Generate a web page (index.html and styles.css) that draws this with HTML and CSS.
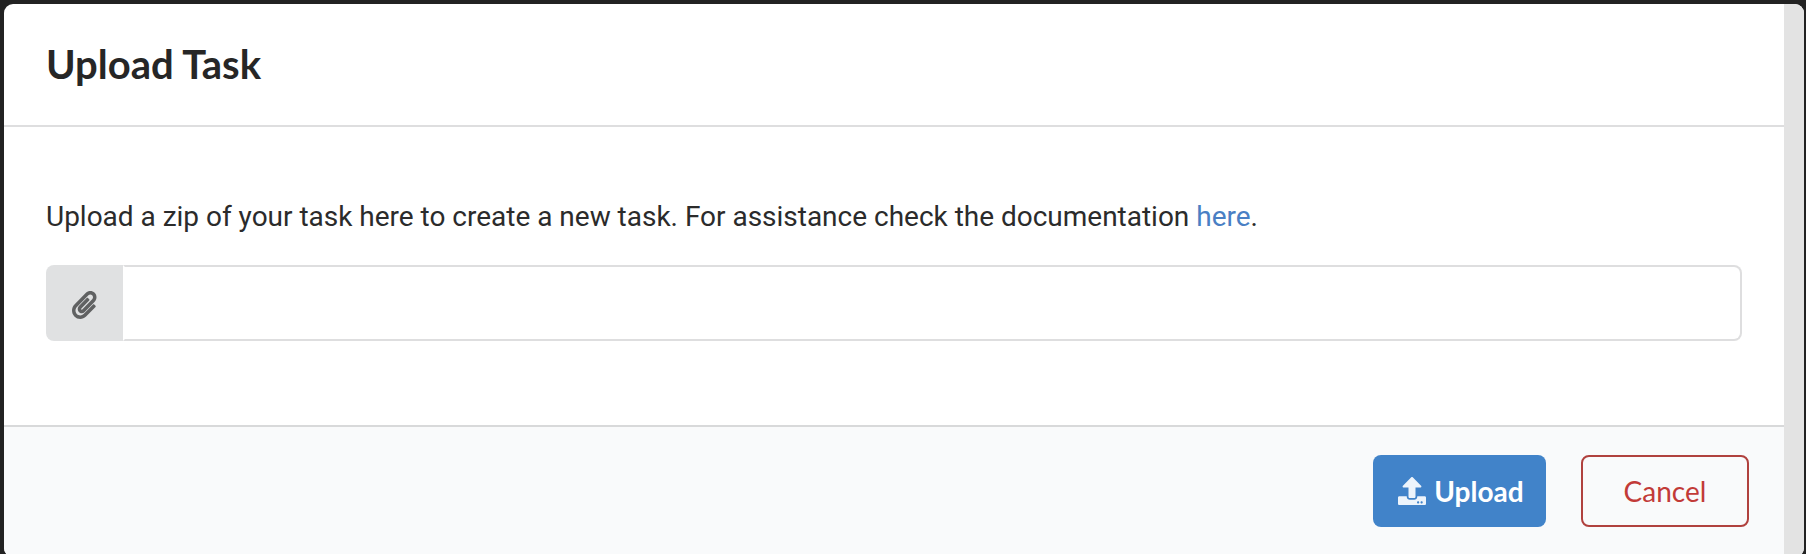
FILE: index.html
```html
<!DOCTYPE html>
<html lang="en">
<head>
<meta charset="utf-8">
<title>Upload Task</title>
<link rel="stylesheet" href="styles.css">
</head>
<body>
<div class="modal">
  <div class="panel">
    <header class="header"><h1 class="title">Upload Task</h1></header>
    <main class="content">
      <p class="message">Upload a zip of your task here to create a new task. For assistance check the documentation <a class="link" href="#">here</a>.</p>
      <div class="field">
        <button class="attach" aria-label="Choose file">
          <svg class="clip" viewBox="0 0 448 512"><path d="M43.246 466.142c-58.43-60.289-57.341-157.511 1.386-217.581L254.392 34c44.316-45.332 116.351-45.336 160.671 0 43.89 44.894 43.943 117.329 0 162.276L232.214 383.128c-29.855 30.537-78.633 30.111-107.982-.998-28.275-29.97-27.368-77.473 1.452-106.953l143.743-146.835c6.182-6.314 16.312-6.422 22.626-.241l22.861 22.379c6.315 6.182 6.422 16.312.241 22.626L171.427 319.927c-4.932 5.045-5.236 13.428-.648 18.292 4.372 4.634 11.245 4.711 15.688.165l182.849-186.851c19.613-20.062 19.613-52.725-.011-72.798-19.189-19.627-49.957-19.637-69.154 0L90.39 293.295c-34.763 35.56-35.299 93.12-1.191 128.313 34.01 35.093 88.985 35.137 123.058.286l172.06-175.999c6.177-6.319 16.307-6.433 22.626-.256l22.877 22.364c6.319 6.177 6.434 16.307.256 22.626l-172.06 175.998c-59.576 60.938-155.943 60.216-214.77-.485z"/></svg>
        </button>
        <input class="input" type="text" readonly aria-label="File name">
      </div>
    </main>
    <footer class="actions">
      <button class="button primary">
        <svg class="upload" viewBox="0 0 512 512"><path d="M296 384h-80c-13.3 0-24-10.7-24-24V192h-87.7c-17.8 0-26.7-21.5-14.1-34.1L242.3 5.7c7.5-7.5 19.8-7.5 27.3 0l152.2 152.2c12.6 12.6 3.7 34.1-14.1 34.1H320v168c0 13.3-10.7 24-24 24zm216-8v112c0 13.3-10.7 24-24 24H24c-13.3 0-24-10.7-24-24V376c0-13.3 10.7-24 24-24h136v8c0 30.9 25.1 56 56 56h80c30.9 0 56-25.1 56-56v-8h136c13.3 0 24 10.7 24 24zm-124 88c0-11-9-20-20-20s-20 9-20 20 9 20 20 20 20-9 20-20zm64 0c0-11-9-20-20-20s-20 9-20 20 9 20 20 20 20-9 20-20z"/></svg>
        <span>Upload</span>
      </button>
      <button class="button cancel">Cancel</button>
    </footer>
  </div>
  <div class="scrollbar"></div>
</div>
</body>
</html>
```
FILE: styles.css
```css
* {
  box-sizing: border-box;
}

body {
  margin: 0;
  height: 554px;
  padding: 4px 2px 0 4px;
  overflow: hidden;
  background: #222;
  font-family: Roboto, sans-serif;
}

.modal {
  display: flex;
  height: 553px;
  border-radius: 9px;
  overflow: hidden;
  background: #fff;
}

.panel {
  flex: 1;
  display: flex;
  flex-direction: column;
}

.scrollbar {
  width: 20px;
  background: #e3e3e3;
}

.header {
  height: 123px;
  padding: 35px 42px 0;
  border-bottom: 2px solid #dededf;
}

.title {
  margin: 0;
  font: bold 40px/50px Lato, sans-serif;
  color: #262626;
}

.content {
  height: 298px;
  padding: 70px 42px 0;
}

.message {
  margin: 0 0 28px;
  font-size: 28px;
  line-height: 40px;
  letter-spacing: -0.012px;
  color: #2b2b2b;
}

.link {
  color: #4a7fc4;
  text-decoration: none;
}

.field {
  display: flex;
  width: 1696px;
  height: 76px;
}

.attach {
  width: 77px;
  padding: 3px 0 0;
  border: 0;
  border-radius: 8px 0 0 8px;
  background: #e0e1e2;
  display: flex;
  align-items: center;
  justify-content: center;
}

.clip {
  width: 24.5px;
  height: 28px;
  fill: #606162;
}

.input {
  flex: 1;
  border: 2px solid #dededf;
  border-left-color: transparent;
  border-radius: 0 8px 8px 0;
  background: #fff;
  outline: 0;
}

.actions {
  flex: 1;
  display: flex;
  align-items: flex-start;
  justify-content: flex-end;
  gap: 35px;
  padding: 28px 35px 0;
  border-top: 2px solid #d8d9da;
  background: #f9fafb;
}

.button {
  display: flex;
  align-items: center;
  justify-content: center;
  height: 72px;
  padding: 0;
  border: 0;
  border-radius: 8px;
  font: 28px/28px Lato, sans-serif;
}

.primary {
  width: 173px;
  gap: 8px;
  padding-left: 3px;
  background: #4183c9;
  color: #fff;
  font-weight: bold;
}

.upload {
  width: 28px;
  height: 28px;
  fill: #edf4fb;
}

.cancel {
  width: 168px;
  border: 2px solid #b0413e;
  background: transparent;
  color: #c23a38;
}
```
